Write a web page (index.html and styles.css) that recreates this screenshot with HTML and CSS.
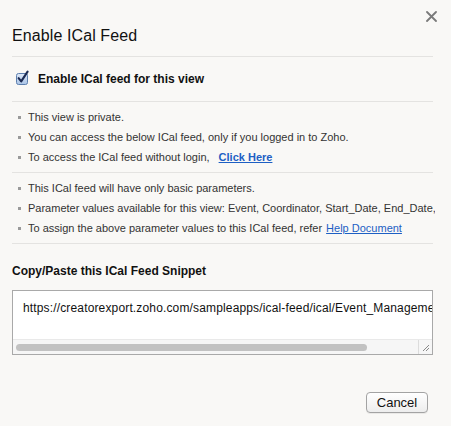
FILE: index.html
```html
<!DOCTYPE html>
<html>
<head>
<meta charset="utf-8">
<link rel="stylesheet" href="styles.css">
</head>
<body>
<div class="dialog">
  <button class="close" aria-label="Close">
    <svg width="11" height="11" viewBox="0 0 11 11"><path d="M1 1 L10 10 M10 1 L1 10" stroke="#7a7a7a" stroke-width="1.8" stroke-linecap="round"/></svg>
  </button>
  <h1 class="title">Enable ICal Feed</h1>
  <div class="divider"></div>
  <div class="enable-row">
    <span class="checkbox">
      <svg width="15" height="15" viewBox="0 0 15 15">
        <defs>
          <linearGradient id="cb" x1="0" y1="0" x2="0" y2="1">
            <stop offset="0" stop-color="#dfe9f7"/>
            <stop offset="1" stop-color="#a9c3e6"/>
          </linearGradient>
        </defs>
        <rect x="1.5" y="3.5" width="11" height="11" rx="2" fill="url(#cb)" stroke="#5d7fae" stroke-width="1"/>
        <path d="M3.6 8.2 L6.2 11.4 L12.6 1.6" fill="none" stroke="#1b2a52" stroke-width="2.1" stroke-linejoin="round" stroke-linecap="round"/>
      </svg>
    </span>
    <span class="enable-label">Enable ICal feed for this view</span>
  </div>
  <div class="divider"></div>
  <ul class="notes">
    <li>This view is private.</li>
    <li>You can access the below ICal feed, only if you logged in to Zoho.</li>
    <li>To access the ICal feed without login, <a class="link strong" href="#">Click Here</a></li>
  </ul>
  <div class="divider"></div>
  <ul class="notes">
    <li>This ICal feed will have only basic parameters.</li>
    <li>Parameter values available for this view: Event, Coordinator, Start_Date, End_Date,</li>
    <li>To assign the above parameter values to this ICal feed, refer <a class="link" href="#">Help Document</a></li>
  </ul>
  <div class="divider"></div>
  <div class="snippet-title">Copy/Paste this ICal Feed Snippet</div>
  <div class="snippet">
    <div class="snippet-text">https://creatorexport.zoho.com/sampleapps/ical-feed/ical/Event_Management/</div>
    <div class="scroll-row">
      <div class="scroll-track"><div class="scroll-thumb"></div></div>
      <div class="resize">
        <svg width="8" height="8" viewBox="0 0 8 8"><path d="M1 7 L7 1 M4 7 L7 4" stroke="#8a8a8a" stroke-width="1"/></svg>
      </div>
    </div>
  </div>
  <div class="actions">
    <button class="btn">Cancel</button>
  </div>
</div>
</body>
</html>
```
FILE: styles.css
```css
html, body {
  margin: 0;
  padding: 0;
  background: #f9f8f6;
}
body {
  font-family: "Liberation Sans", Arial, Helvetica, sans-serif;
  color: #222;
  width: 451px;
  height: 426px;
  overflow: hidden;
}
.dialog {
  position: relative;
  padding: 26px 18px 0 12px;
}
.close {
  position: absolute;
  top: 11px;
  left: 426px;
  width: 11px;
  height: 11px;
  padding: 0;
  border: 0;
  background: none;
  display: block;
}
.close svg { display: block; }
.title {
  margin: 0;
  font-size: 16px;
  font-weight: normal;
  line-height: 20px;
  color: #111;
  letter-spacing: 0.1px;
}
.divider {
  height: 1px;
  background: #e4e3e1;
  width: 421px;
}
.title + .divider { margin-top: 10px; }
.enable-row {
  height: 44px;
  display: flex;
  align-items: center;
  padding-left: 3px;
}
.checkbox {
  width: 15px;
  height: 15px;
  margin-top: -3px;
}
.checkbox svg { display: block; }
.enable-label {
  margin-left: 8px;
  font-size: 12px;
  font-weight: bold;
  color: #111;
  line-height: 14px;
}
.notes {
  list-style: none;
  margin: 0;
  padding: 5px 0;
  font-size: 11px;
  color: #333;
  width: 423px;
  white-space: nowrap;
  overflow: hidden;
}
.notes li {
  display: flex;
  align-items: center;
  height: 20px;
  line-height: 20px;
}
.notes li::before {
  content: "";
  width: 3px;
  height: 3px;
  background: #9a9a9a;
  margin-left: 6px;
  margin-right: 7px;
  flex: none;
}
.link {
  color: #1d5fc4;
  text-decoration: underline;
  margin-left: 4px;
}
.link.strong {
  font-weight: bold;
  margin-left: 9px;
}
.snippet-title {
  margin-top: 20px;
  font-size: 12px;
  font-weight: bold;
  line-height: 14px;
  color: #111;
}
.snippet {
  margin-top: 12px;
  width: 419px;
  border: 1px solid #a9a9a9;
  background: #fff;
}
.snippet-text {
  height: 48px;
  box-sizing: border-box;
  padding: 10px 0 0 10px;
  font-size: 12px;
  line-height: 14px;
  letter-spacing: 0.15px;
  color: #111;
  white-space: nowrap;
  overflow: hidden;
}
.scroll-row {
  display: flex;
  height: 15px;
  background: #f6f6f6;
  border-top: 1px solid #e9e9e9;
  box-sizing: border-box;
}
.scroll-track {
  flex: 1;
  padding: 4px 0 0 3px;
}
.scroll-thumb {
  width: 351px;
  height: 7px;
  border-radius: 4px;
  background: #c2c2c2;
}
.resize {
  width: 14px;
  border-left: 1px solid #dcdcdc;
  display: flex;
  align-items: flex-end;
  justify-content: flex-end;
  padding: 0 2px 2px 0;
  box-sizing: border-box;
}
.resize svg { display: block; }
.actions {
  display: flex;
  justify-content: flex-end;
  width: 416px;
  margin-top: 37px;
}
.btn {
  width: 62px;
  height: 21px;
  padding: 0;
  border: 1px solid #a3a3a3;
  border-radius: 4px;
  background: linear-gradient(#ffffff, #ededed);
  font-family: "Liberation Sans", Arial, Helvetica, sans-serif;
  font-size: 13px;
  color: #111;
  box-shadow: 0 1px 0 rgba(0,0,0,0.06);
}
```
